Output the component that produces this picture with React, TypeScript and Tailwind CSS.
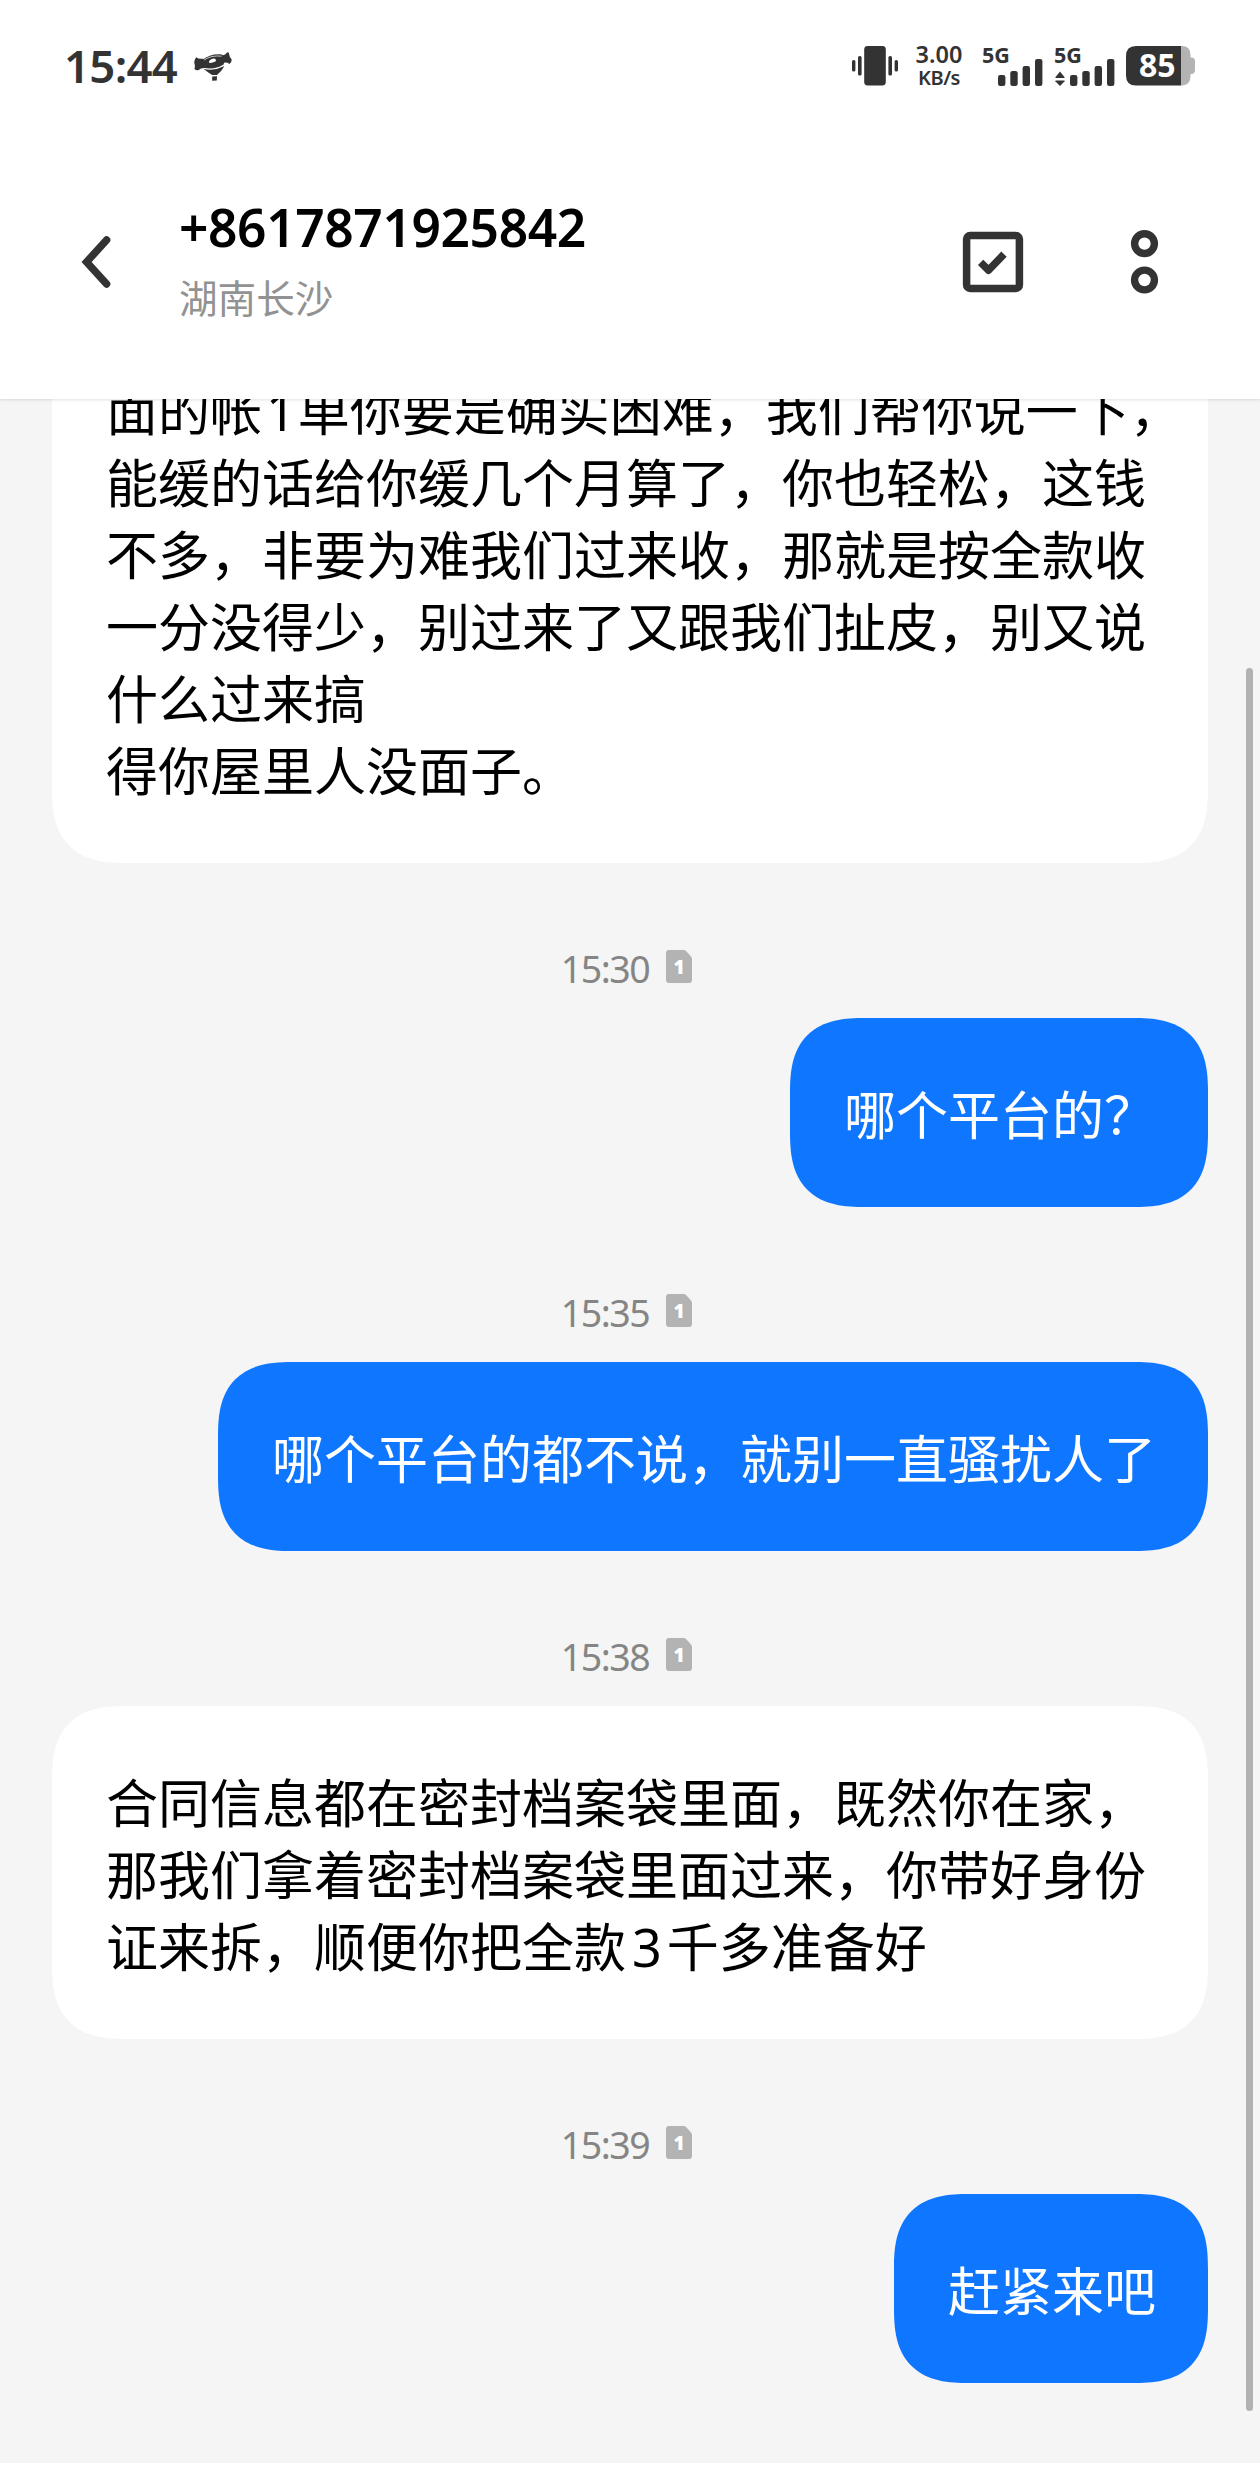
import React from "react";

const ink = "#333333";

function PlanetIcon() {
  return (
    <svg width="38" height="30" viewBox="0 0 38 30" className="mt-[1px] ml-[17px]" fill={ink}>
      <path d="M0.3 11 Q-0.2 7.5 2.4 5.2 Q4 7.3 9.6 6.7 L11 16 Q7 15.6 4.8 18 Q2.4 18.8 0.4 17 Q1.4 14 0.3 11 Z" />
      <path d="M26.4 3.4 Q31 3.6 33 0.4 Q34.6 -0.4 35 1.4 Q35.2 4.6 37.7 7.6 Q37.8 11 35.4 12 Q33 9.8 28.4 11 Z" />
      <path d="M8.6 8 Q16 1.4 28 2.4 Q31.6 8 29.6 12.6 Q20 18.4 9.8 15.8 Q7.2 12 8.6 8 Z" />
      <path d="M9.6 16.8 Q20 19.4 30.4 14 Q27.4 19.6 23 23 L18.2 23 Q13.6 20.4 9.6 16.8 Z" />
      <path d="M18.2 24.6 L23 24.2 L22.8 28.4 L18.2 28.8 Z" />
      <path d="M10.2 8 Q17 3 27.6 4.2" fill="none" stroke="#ffffff" strokeWidth="0.7" />
      <path d="M15 9.4 Q16 7 20.6 6.6 Q22.4 7.4 21.8 9.2 Q18.4 11.2 15.4 11 Z" fill="#ffffff" />
    </svg>
  );
}

function VibrateIcon() {
  return (
    <svg width="46" height="40" viewBox="0 0 46 40" fill={ink}>
      <rect x="0" y="14" width="3.4" height="11.5" rx="1.6" />
      <rect x="6" y="10" width="3.6" height="19.5" rx="1.6" />
      <rect x="12.2" y="0" width="21.6" height="39.4" rx="3.4" />
      <rect x="36.4" y="10" width="3.6" height="19.5" rx="1.6" />
      <rect x="42.6" y="14" width="3.4" height="11.5" rx="1.6" />
    </svg>
  );
}

function Signal({ arrows = false }: { arrows?: boolean }) {
  return (
    <div className={arrows ? "relative ml-[12px] h-10 w-[60px]" : "relative ml-[18px] h-10 w-[60px]"}>
      <span className="absolute top-[-3px] left-[-1px] font-['Noto_Sans'] text-[21.5px] leading-[24px] font-bold">5G</span>
      <svg width="60" height="40" viewBox="0 0 60 40" fill={ink} className="absolute top-0 left-0">
        {arrows && (
          <>
            <path d="M5 25.4 L9.6 31.2 Q10 32 9 32 L1 32 Q0 32 0.4 31.2 Z" />
            <path d="M5 40 L9.6 35.2 Q10 34.4 9 34.4 L1 34.4 Q0 34.4 0.4 35.2 Z" />
          </>
        )}
        <rect x="15" y="29" width="7.4" height="11" rx="2.2" />
        <rect x="27.3" y="25" width="7.4" height="15" rx="2.2" />
        <rect x="39.6" y="20" width="7.4" height="20" rx="2.2" />
        <rect x="52" y="13" width="7.4" height="27" rx="2.2" />
      </svg>
    </div>
  );
}

function Battery() {
  return (
    <div className="relative ml-[11px] h-10 w-[70px]">
      <svg width="70" height="40" viewBox="0 0 70 40" className="absolute inset-0">
        <path d="M55 0 H56 Q64.5 0 64.5 9 V11.5 H66 Q69 12 69 15.5 V24 Q69 27.4 66 28 H64.5 V30 Q64.5 39.4 56 39.4 H55 Z" fill="#b3b3b3" />
        <path d="M10 0 H55 V39.4 H10 Q0 39.4 0 29.4 V10 Q0 0 10 0 Z" fill={ink} />
      </svg>
      <span className="absolute top-[-1px] left-[13px] font-['Noto_Sans'] text-[32px] leading-[40px] font-bold text-white">85</span>
    </div>
  );
}

function StatusBar() {
  return (
    <div className="flex h-[132px] items-center pr-[64px] pl-[64px] text-[#333333]">
      <span className="mt-[-2px] font-['Noto_Sans'] text-[45.5px] leading-[54px] font-semibold tracking-[-0.7px]">15:44</span>
      <PlanetIcon />
      <div className="ml-auto flex items-center">
        <VibrateIcon />
        <div className="mt-[-1px] ml-[15px] flex h-[48px] w-[52px] flex-col items-center font-['Noto_Sans'] font-semibold">
          <span className="text-[23.5px] leading-[24px]">3.00</span>
          <span className="text-[20px] leading-[24px] tracking-[-0.5px]">KB/s</span>
        </div>
        <Signal />
        <Signal arrows />
        <Battery />
      </div>
    </div>
  );
}

function Header() {
  return (
    <header className="relative z-10 h-[399px] shrink-0 bg-white shadow-[0_1px_3px_rgba(0,0,0,0.12)]">
      <StatusBar />
      <div className="flex h-[260px] items-center pr-[101px] pl-[79px]">
        <svg width="32" height="52" viewBox="0 0 32 52" fill="none" stroke={ink} strokeWidth="7.5" strokeLinecap="round" strokeLinejoin="miter">
          <path d="M27.6 4 L7.6 26 L27.6 48" />
        </svg>
        <div className="mt-[-5px] ml-[68px] flex flex-col">
          <span className="font-['Noto_Sans'] text-[51.5px] leading-[64px] font-semibold tracking-[-0.4px] text-black">+8617871925842</span>
          <span className="mt-[9px] font-['Noto_Sans_CJK_SC',sans-serif] text-[38.6px] leading-[56px] font-normal text-[#929292]">湖南长沙</span>
        </div>
        <svg width="62" height="62" viewBox="0 0 62 62" fill="none" stroke={ink} strokeWidth="7.5" className="ml-auto">
          <rect x="4.6" y="4.6" width="52.8" height="52.8" rx="3.5" />
          <path d="M18.6 31.4 L26.6 39.2 L42 23.2" strokeLinejoin="round" />
        </svg>
        <svg width="30" height="66" viewBox="0 0 30 66" fill="none" stroke={ink} strokeWidth="7.4" className="ml-[105px]">
          <circle cx="15.5" cy="14.6" r="9.9" />
          <circle cx="15.5" cy="51" r="9.9" />
        </svg>
      </div>
    </header>
  );
}

function Bubble({ mine = false, lines }: { mine?: boolean; lines: React.ReactNode[] }) {
  return (
    <div
      className={
        mine
          ? "w-fit self-end rounded-[75px] bg-[#0f76ff] pt-[59px] pr-[52px] pb-[58px] pl-[54px] text-white [corner-shape:superellipse(1.4)]"
          : "w-full rounded-[75px] bg-white pt-[59px] pr-[52px] pb-[58px] pl-[54px] text-black [corner-shape:superellipse(1.4)]"
      }
    >
      {lines.map((line, i) => (
        <p key={i} className="h-[72px] font-['Noto_Sans_CJK_SC',sans-serif] text-[52px] leading-[72px] whitespace-nowrap">
          {line}
        </p>
      ))}
    </div>
  );
}

function Stamp({ time }: { time: string }) {
  return (
    <div className="flex h-[155px] shrink-0 justify-center pt-[80px] pr-[7px]">
      <span className="h-[52px] font-['Noto_Sans'] text-[37.5px] leading-[52px] tracking-[-1.5px] text-[#858585]">{time}</span>
      <div className="relative mt-[7px] ml-[17px] h-[33px] w-[26px]">
        <svg width="26" height="33" viewBox="0 0 26 33" className="absolute inset-0">
          <path d="M3 0 H17.5 Q19 0 20 1 L25 6.4 Q26 7.4 26 9 V30 Q26 33 23 33 H3 Q0 33 0 30 V3 Q0 0 3 0 Z" fill="#b3b3b3" />
        </svg>
        <span className="absolute inset-0 text-center font-['Noto_Sans'] text-[19px] leading-[35px] font-black text-white">1</span>
      </div>
    </div>
  );
}

export default function App() {
  return (
    <div className="relative flex h-[2480px] w-[1260px] flex-col overflow-hidden bg-white">
      <Header />
      <main className="flex h-[2064px] shrink-0 flex-col justify-end overflow-hidden bg-[#f5f5f5] pr-[52px] pb-[80px] pl-[52px]">
        <Bubble
          lines={[
            <>面的帐<span className="mr-[2px] ml-[4px] font-['Noto_Sans']">1</span>单你要是确实困难，我们帮你说一下，</>,
            "能缓的话给你缓几个月算了，你也轻松，这钱",
            "不多，非要为难我们过来收，那就是按全款收",
            "一分没得少，别过来了又跟我们扯皮，别又说",
            "什么过来搞",
            "得你屋里人没面子。",
          ]}
        />
        <Stamp time="15:30" />
        <Bubble mine lines={["哪个平台的？"]} />
        <Stamp time="15:35" />
        <Bubble mine lines={["哪个平台的都不说，就别一直骚扰人了"]} />
        <Stamp time="15:38" />
        <Bubble
          lines={[
            "合同信息都在密封档案袋里面，既然你在家，",
            "那我们拿着密封档案袋里面过来，你带好身份",
            <>证来拆，顺便你把全款<span className="mr-[5px] ml-[6px] font-['Noto_Sans']">3</span>千多准备好</>,
          ]}
        />
        <Stamp time="15:39" />
        <Bubble mine lines={["赶紧来吧"]} />
      </main>
      <div className="absolute top-[668px] left-[1246px] h-[1743px] w-[7px] rounded-full bg-[#b1b1b1]" />
    </div>
  );
}
